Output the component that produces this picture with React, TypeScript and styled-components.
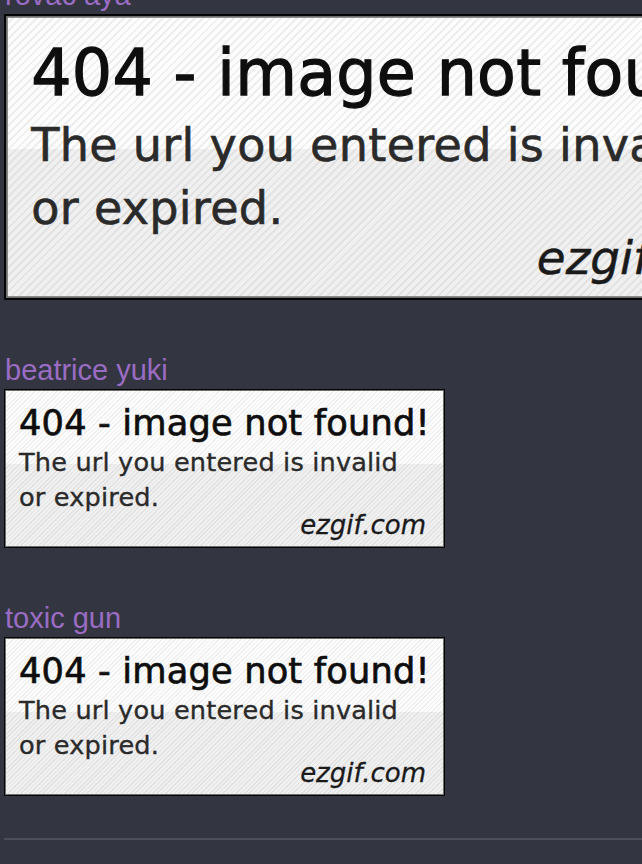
import styled, { createGlobalStyle } from "styled-components";

const GlobalStyle = createGlobalStyle`
  html, body {
    margin: 0;
    padding: 0;
    background: #333641;
    overflow: hidden;
  }
  body {
    font-family: "Liberation Sans", Arial, sans-serif;
  }
`;

const Page = styled.div`
  width: 642px;
  height: 864px;
  overflow: hidden;
  padding-left: 4px;
  box-sizing: border-box;
`;

const Feed = styled.div`
  display: flex;
  flex-direction: column;
  gap: 53px;
  margin-top: -22px;
`;

const Message = styled.div`
  display: flex;
  flex-direction: column;
`;

const Author = styled.div`
  font-size: 29px;
  line-height: 34px;
  color: #9a6cc4;
  padding-left: 1px;
  margin-bottom: 2px;
  white-space: nowrap;
`;

// the broken ezgif placeholder, drawn at base size 441x159 and scaled by --s
const Placeholder = styled.div<{ $scale: number }>`
  --s: ${(p) => p.$scale};
  flex: none;
  box-sizing: border-box;
  width: calc(441px * var(--s));
  height: calc(159px * var(--s));
  border: calc(1.2px * var(--s)) solid #050505;
  box-shadow: inset 0 0 0 calc(1px * var(--s)) #6e6e6e;
  padding: calc(14.5px * var(--s)) calc(18px * var(--s)) 0 calc(14px * var(--s));
  display: flex;
  flex-direction: column;
  font-family: "DejaVu Sans", Verdana, sans-serif;
  background:
    repeating-linear-gradient(
      135deg,
      rgba(0, 0, 0, 0.06) 0 calc(1.1px * var(--s)),
      transparent calc(1.1px * var(--s)) calc(3.1px * var(--s))
    ),
    linear-gradient(#fdfdfd 0 47%, #f0f0f0 47% 100%);
`;

const Title = styled.div`
  font-size: calc(35.2px * var(--s));
  line-height: calc(35px * var(--s));
  letter-spacing: calc(0.18px * var(--s));
  color: #0e0e0e;
  -webkit-text-stroke: calc(0.7px * var(--s)) #0e0e0e;
  white-space: nowrap;
`;

const Body = styled.div`
  margin-top: calc(5px * var(--s));
  font-size: calc(25.6px * var(--s));
  line-height: calc(35px * var(--s));
  letter-spacing: calc(0.17px * var(--s));
  color: #2a2a2a;
  -webkit-text-stroke: calc(0.35px * var(--s)) #2a2a2a;
  width: calc(405px * var(--s));
`;

const Credit = styled.div`
  align-self: flex-end;
  font-size: calc(26px * var(--s));
  line-height: calc(20px * var(--s));
  font-style: italic;
  color: #1a1a1a;
  -webkit-text-stroke: calc(0.3px * var(--s)) #1a1a1a;
  white-space: nowrap;
`;

const Divider = styled.div`
  height: 2px;
  background: #4b4f5b;
  margin-top: 42px;
`;

const messages = [
  { name: "rovac aya", scale: 1.8 },
  { name: "beatrice yuki", scale: 1 },
  { name: "toxic gun", scale: 1 },
];

const BrokenImage = ({ scale }: { scale: number }) => (
  <Placeholder $scale={scale}>
    <Title>404 - image not found!</Title>
    <Body>
      The url you entered is invalid
      <br />
      or expired.
    </Body>
    <Credit>ezgif.com</Credit>
  </Placeholder>
);

const App = () => {
  return (
    <Page>
      <GlobalStyle />
      <Feed>
        {messages.map((m) => (
          <Message key={m.name}>
            <Author>{m.name}</Author>
            <BrokenImage scale={m.scale} />
          </Message>
        ))}
      </Feed>
      <Divider />
    </Page>
  );
};

export default App;
